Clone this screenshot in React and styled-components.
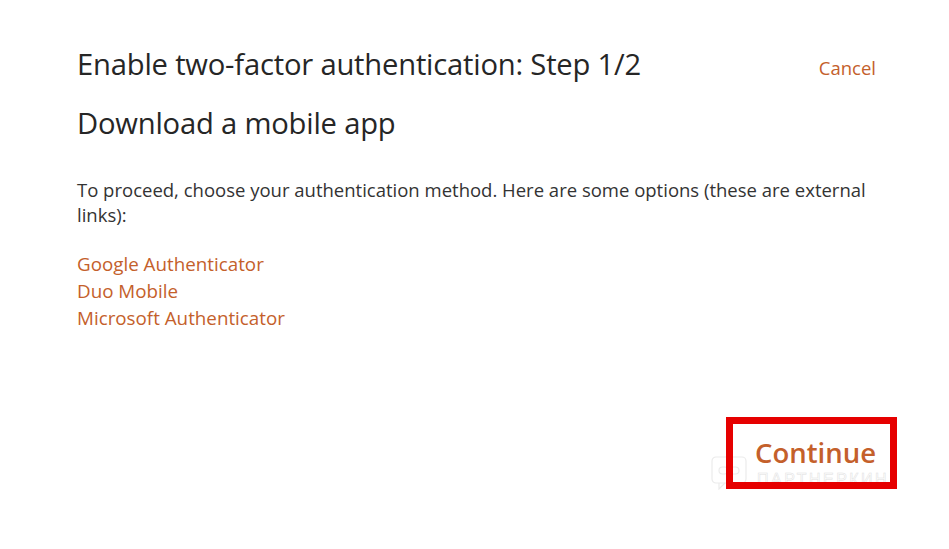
import React from "react";
import styled, { createGlobalStyle } from "styled-components";

const GlobalStyle = createGlobalStyle`
  html, body {
    margin: 0;
    padding: 0;
    background: #fff;
  }
  body {
    font-family: "Open Sans", "Noto Sans", sans-serif;
    color: #2b2b2b;
  }
`;

const Page = styled.div`
  position: relative;
  width: 949px;
  height: 549px;
  box-sizing: border-box;
  padding: 44px 73px 0 77px;
  display: flex;
  flex-direction: column;
`;

const Header = styled.div`
  display: flex;
  justify-content: space-between;
  align-items: flex-start;
`;

const Title = styled.h1`
  margin: 0;
  font-size: 29.2px;
  font-weight: 500;
  line-height: 40px;
  color: #262626;
  letter-spacing: -0.2px;
`;

const Subtitle = styled(Title).attrs({ as: "h2" })`
  margin-top: 19px;
`;

const TextLink = styled.a`
  color: #c4602b;
  text-decoration: none;
  font-size: ${(p) => p.size || 18.8}px;
  line-height: 27px;
  cursor: pointer;
`;

const CancelLink = styled(TextLink)`
  margin-top: 10px;
`;

const Body = styled.p`
  margin: 34px 0 0;
  font-size: 18.5px;
  line-height: 25px;
  color: #333;
`;

const LinkList = styled.div`
  display: flex;
  flex-direction: column;
  margin-top: 24px;
`;

const Footer = styled.div`
  position: relative;
  z-index: 1;
  display: flex;
  justify-content: flex-end;
  margin-top: 85px;
  margin-right: -21px;
`;

const Highlight = styled.div`
  border: 7px solid #e60000;
  padding: 12px 14px 12px 22px;
`;

const ContinueButton = styled.button`
  border: none;
  background: none;
  padding: 0;
  font-family: inherit;
  font-size: 27.5px;
  font-weight: 600;
  line-height: 34px;
  color: #c4602b;
  cursor: pointer;
`;

const Watermark = styled.div`
  position: absolute;
  left: 711px;
  top: 456px;
  display: flex;
  align-items: center;
  gap: 10px;
  pointer-events: none;
`;

const WatermarkText = styled.span`
  font-family: "Liberation Sans", Arial, sans-serif;
  font-size: 16px;
  line-height: 12px;
  letter-spacing: 2.5px;
  color: #fff;
  -webkit-text-stroke: 0.5px #e0e0e0;
  padding-top: 14px;
`;

const WatermarkLogo = () => (
  <svg width="36" height="34" viewBox="0 0 36 34" fill="none" stroke="#ebebeb" strokeWidth="1.2">
    <rect x="1" y="1" width="34" height="26" rx="4" />
    <path d="M8 27 L8 33 L14 27" />
    <rect x="8" y="11" width="9" height="7" rx="3.5" />
    <rect x="19" y="11" width="9" height="7" rx="3.5" />
  </svg>
);

export default function App() {
  return (
    <>
      <GlobalStyle />
      <Page>
        <Header>
          <Title>Enable two-factor authentication: Step 1/2</Title>
          <CancelLink size={18.5}>Cancel</CancelLink>
        </Header>
        <Subtitle>Download a mobile app</Subtitle>
        <Body>
          To proceed, choose your authentication method. Here are some options (these are external
          links):
        </Body>
        <LinkList>
          <TextLink>Google Authenticator</TextLink>
          <TextLink>Duo Mobile</TextLink>
          <TextLink>Microsoft Authenticator</TextLink>
        </LinkList>
        <Watermark>
          <WatermarkLogo />
          <WatermarkText>ПАРТНЕРКИН</WatermarkText>
        </Watermark>
        <Footer>
          <Highlight>
            <ContinueButton>Continue</ContinueButton>
          </Highlight>
        </Footer>
      </Page>
    </>
  );
}
